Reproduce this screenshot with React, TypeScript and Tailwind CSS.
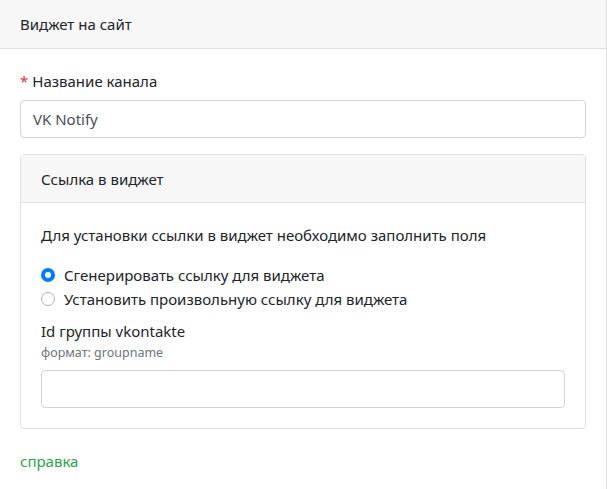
function Radio({ checked, label }: { checked?: boolean; label: string }) {
  return (
    <label className="flex items-center gap-[9px] leading-6">
      <span
        className={
          checked
            ? 'flex items-center justify-center w-[14px] h-[14px] rounded-full bg-[#007bff]'
            : 'w-[14px] h-[14px] rounded-full border border-[#adb5bd] bg-white'
        }
      >
        {checked && <span className="w-[6px] h-[6px] rounded-full bg-white" />}
      </span>
      {label}
    </label>
  );
}

export default function App() {
  return (
    <div className="min-h-screen bg-white text-[#212529] font-['Noto_Sans',sans-serif] text-[15px]">
      <div className="w-[607px] border-r border-[#dfdfdf]">
        <div className="h-[49px] border-b border-[#dfdfdf] bg-[#f7f7f7] px-5 py-3 leading-6">Виджет на сайт</div>

        <div className="px-5 pt-5 pb-4">
          <label className="block leading-6 mb-[7px]">
            <span className="text-[#dc3545] mr-1">*</span>Название канала
          </label>
          <input
            defaultValue="VK Notify"
            className="block w-full h-[38px] rounded border border-[#ced4da] px-3 text-[15px] text-[#495057] outline-none"
          />

          <div className="mt-4 rounded border border-[#dfdfdf]">
            <div className="h-[48px] border-b border-[#dfdfdf] bg-[#f7f7f7] px-5 py-3 leading-6">Ссылка в виджет</div>
            <div className="p-5">
              <p className="leading-6 mb-4">Для установки ссылки в виджет необходимо заполнить поля</p>
              <Radio checked label="Сгенерировать ссылку для виджета" />
              <Radio label="Установить произвольную ссылку для виджета" />
              <div className="mt-2 leading-6">Id группы vkontakte</div>
              <div className="text-[12.5px] leading-5 text-[#6c757d]">формат: groupname</div>
              <input className="mt-[7px] block w-full h-[38px] rounded border border-[#ced4da] px-3 outline-none" />
            </div>
          </div>

          <a href="#" className="block mt-5 leading-6 text-[#28a745]">справка</a>
        </div>
      </div>
    </div>
  );
}
